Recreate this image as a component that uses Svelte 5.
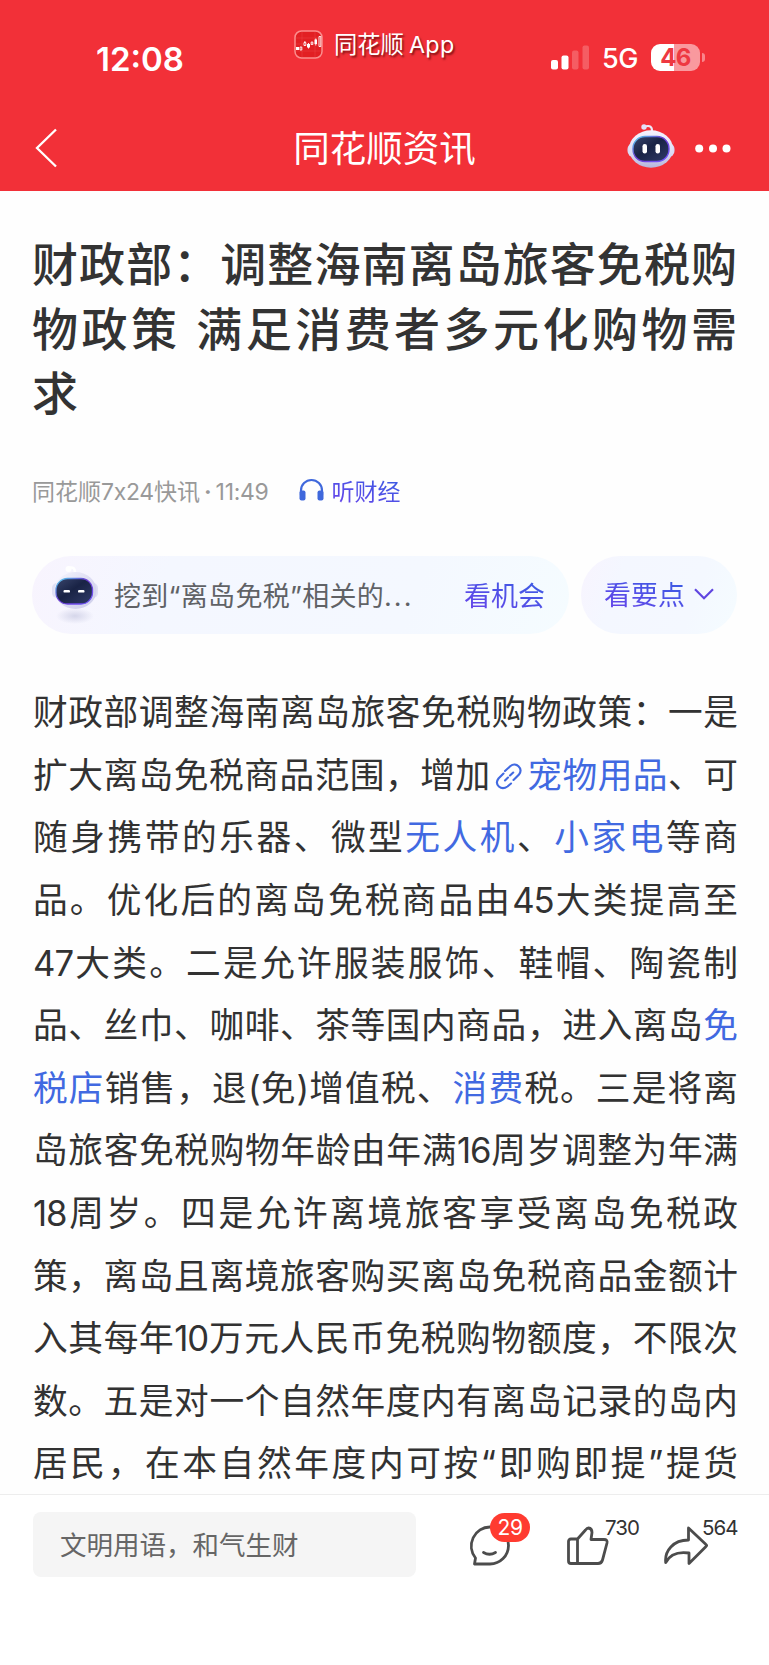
<script>
  const title = ['财政部：调整海南离岛旅客免税购', '物政策 满足消费者多元化购物需', '求'];

  const body = [
    [{ t: '财政部调整海南离岛旅客免税购物政策：一是' }],
    [{ t: '扩大离岛免税商品范围，增加' }, { icon: true }, { t: '宠物用品', link: true }, { t: '、可' }],
    [{ t: '随身携带的乐器、微型' }, { t: '无人机', link: true }, { t: '、' }, { t: '小家电', link: true }, { t: '等商' }],
    [{ t: '品。优化后的离岛免税商品由' }, { t: '45', num: true }, { t: '大类提高至' }],
    [{ t: '47', num: true }, { t: '大类。二是允许服装服饰、鞋帽、陶瓷制' }],
    [{ t: '品、丝巾、咖啡、茶等国内商品，进入离岛' }, { t: '免', link: true }],
    [{ t: '税店', link: true }, { t: '销售，退' }, { t: '(', num: true }, { t: '免' }, { t: ')', num: true }, { t: '增值税、' }, { t: '消费', link: true }, { t: '税。三是将离' }],
    [{ t: '岛旅客免税购物年龄由年满' }, { t: '16', num: true }, { t: '周岁调整为年满' }],
    [{ t: '18', num: true }, { t: '周岁。四是允许离境旅客享受离岛免税政' }],
    [{ t: '策，离岛且离境旅客购买离岛免税商品金额计' }],
    [{ t: '入其每年' }, { t: '10', num: true }, { t: '万元人民币免税购物额度，不限次' }],
    [{ t: '数。五是对一个自然年度内有离岛记录的岛内' }],
    [{ t: '居民，在本自然年度内可按“即购即提”提货' }],
  ];
</script>

<div class="page">
  <header>
    <div class="status">
      <span class="time">12:08</span>
      <div class="app">
        <svg width="29" height="29" viewBox="0 0 29 29">
          <rect x="1" y="1" width="27" height="27" rx="6.5" fill="#e21f23" stroke="#fb8d8d" stroke-width="1.5" />
          <path d="M2 8H27M2 14H27M2 21H27M8 2V27M21 2V27" stroke="#ef4c4c" stroke-width=".4" />
          <path d="M2 17h3v3H2zM13 14h3v3.5h-3zM20.5 9.5h2.5v4.500h-2.500z" fill="#fff" />
          <path d="M6 17h1.800v3H6zM10 12.500h1.800v3H10zM17.200 12h1.600v2.500h-1.600zM25 6.500h1.800v10H25zM10.900 11v1.500M14.500 13v5.500M21.800 8.500v7" fill="none" stroke="#fff" stroke-width=".9" />
        </svg>
        <span class="app-name">同花顺<i>App</i></span>
      </div>
      <div class="signals">
        <svg width="39" height="25" viewBox="0 0 39 25" fill="#fff">
          <rect x="0" y="15" width="7" height="9.500" rx="2" />
          <rect x="10.500" y="10.500" width="7" height="14" rx="2" />
          <rect x="21" y="5.500" width="6.500" height="19" rx="2" opacity=".22" />
          <rect x="31.500" y="0.500" width="6.500" height="24" rx="2" opacity=".22" />
        </svg>
        <span class="net">5G</span>
        <span class="battery">46</span>
        <span class="nub"></span>
      </div>
    </div>
    <nav>
      <svg class="back" width="23" height="40" viewBox="0 0 23 40"><path d="M21 1.500L2 20L21 38.500" fill="none" stroke="#fff" stroke-width="2.300" /></svg>
      <h2>同花顺资讯</h2>
      <div class="nav-right">
        <svg width="48" height="45" viewBox="0 0 48 45">
          <defs>
            <linearGradient id="shell" x1="0" y1="0" x2="0" y2="1"><stop offset="0" stop-color="#f6f4ff" /><stop offset=".6" stop-color="#dcdcf2" /><stop offset="1" stop-color="#b5b5dc" /></linearGradient>
            <linearGradient id="rim" x1="0" y1="0" x2="1" y2="1"><stop offset="0" stop-color="#55d8ee" /><stop offset=".45" stop-color="#6b3ad0" /><stop offset="1" stop-color="#7058ff" /></linearGradient>
            <linearGradient id="face" x1="0" y1="0" x2="1" y2="1"><stop offset="0" stop-color="#39456c" /><stop offset=".45" stop-color="#192345" /><stop offset="1" stop-color="#303b68" /></linearGradient>
          </defs>
          <path d="M17 3C23 .5 25.500 3 25 8" fill="none" stroke="#eceafa" stroke-width="2.200" />
          <circle cx="17" cy="3" r="2.700" fill="#e3e1fa" />
          <rect x="0.500" y="19" width="47" height="14" rx="6" fill="#dadaf5" />
          <ellipse cx="24" cy="25" rx="22" ry="18.700" fill="url(#shell)" />
          <rect x="6" y="12.500" width="36" height="25" rx="12" fill="url(#face)" stroke="url(#rim)" stroke-width="1.400" />
          <rect x="15.500" y="20" width="4.500" height="9.500" rx="2.200" fill="#fff" /><rect x="28.500" y="20" width="4.500" height="9.500" rx="2.200" fill="#fff" />
        </svg>
        <svg width="36" height="9" viewBox="0 0 36 9" fill="#fff"><circle cx="4.200" cy="4.500" r="4" /><circle cx="18" cy="4.500" r="4" /><circle cx="31.500" cy="4.500" r="4" /></svg>
      </div>
    </nav>
  </header>

  <main>
    <h1>
      {#each title as line, i}
        <span class="line" class:last={i === title.length - 1}>{line}</span>
      {/each}
    </h1>

    <div class="meta">
      <span>同花顺<em>7x24</em>快讯<b>·</b><em>11:49</em></span>
      <svg width="25" height="23" viewBox="0 0 25 23">
        <path d="M2 17V12.500A10.500 10.500 0 0 1 23 12.500V17" fill="none" stroke="#3f68dc" stroke-width="2.200" />
        <rect x=".5" y="12.500" width="6" height="10" rx="2" fill="#3f68dc" /><rect x="18.500" y="12.500" width="6" height="10" rx="2" fill="#3f68dc" />
      </svg>
      <span class="listen">听财经</span>
    </div>

    <div class="pills">
      <div class="pill chance">
        <svg width="48" height="60" viewBox="0 0 48 60">
          <defs>
            <radialGradient id="shade"><stop offset="0" stop-color="#d5d6ea" /><stop offset="1" stop-color="#d5d6ea" stop-opacity="0" /></radialGradient>
            <linearGradient id="shell2" x1="0" y1="0" x2="1" y2="1"><stop offset="0" stop-color="#f7f6fe" /><stop offset=".6" stop-color="#d9d9f1" /><stop offset="1" stop-color="#cdcee9" /></linearGradient>
          </defs>
          <ellipse cx="24" cy="51" rx="19" ry="8" fill="url(#shade)" />
          <path d="M17 3C22 1.500 24 3 24 8" fill="none" stroke="#fff" stroke-width="2.500" />
          <circle cx="17.500" cy="4" r="3" fill="#fff" />
          <rect x="1" y="18" width="46" height="15" rx="5" fill="#e0e0f5" />
          <ellipse cx="24.500" cy="25.500" rx="21" ry="18.500" fill="url(#shell2)" />
          <rect x="5" y="13.500" width="36.500" height="25.500" rx="11.500" fill="url(#face)" stroke="url(#rim)" stroke-width="1.300" />
          <rect x="12.500" y="25" width="6.500" height="2.600" rx="1.200" fill="#fff" /><rect x="27" y="25" width="6.500" height="2.600" rx="1.200" fill="#fff" />
        </svg>
        <span class="hint">挖到“离岛免税”相关的<i>...</i></span>
        <span class="grad">看机会</span>
      </div>
      <div class="pill points">
        <span class="grad">看要点</span>
        <svg width="20" height="12" viewBox="0 0 20 12"><path d="M1 1.200L10 10.200L19 1.200" fill="none" stroke="#6046e0" stroke-width="2.200" /></svg>
      </div>
    </div>

    <article>
      {#each body as line}
        <p>{#each line as part}{#if part.icon}<svg class="chain" width="28" height="28" viewBox="-1 -1 28 28" fill="none" stroke="#4169e1" stroke-width="2.100" stroke-linecap="round"><path d="M9 8L14.500 3C20-1.500 27.500 5.500 23 11.500L17.500 17" /><path d="M7.500 10.500L2.500 15.500C-2 21.500 5 28 11.500 23.500L15 20.500" /><path d="M9 17.500L12 14.500M14 12.500L17.200 9.500" /></svg>{:else}<span class:link={part.link} class:num={part.num}>{part.t}</span>{/if}{/each}</p>
      {/each}
    </article>
  </main>

  <footer>
    <div class="input">文明用语，和气生财</div>
    <div class="action">
      <svg width="42" height="42" viewBox="0 0 42 42" fill="none" stroke="#4c4c4c" stroke-width="2.800" stroke-linecap="round" stroke-linejoin="round">
        <path d="M21 2A18.500 19 0 0 0 6.500 33L5.500 39H21A18.500 18.500 0 0 0 21 2Z" /><path d="M14.500 27.500Q20.500 31 26.500 27.500" />
      </svg>
      <span class="badge">29</span>
    </div>
    <div class="action">
      <svg width="42" height="40" viewBox="0 0 42 40" fill="none" stroke="#4c4c4c" stroke-width="2.800" stroke-linejoin="round">
        <path d="M10.500 13H4Q1.500 13 1.500 15.500V35Q1.500 37.500 4 37.500H31Q34.500 37.500 35.500 34L40 17Q40.800 13.500 37 13.500H24L25 6.500Q25 2.500 21.500 2Q20 2 18.500 4L10.500 13V37.500" />
      </svg>
      <span class="count">730</span>
    </div>
    <div class="action">
      <svg width="45" height="40" viewBox="0 0 45 40" fill="none" stroke="#4c4c4c" stroke-width="2.800" stroke-linejoin="round">
        <path d="M24.500 2L42 18.500Q43.300 19.500 42 20.500L25 37.500V27Q8 24.500 1.700 36.500C.5 25 9 14 24.500 14Z" />
      </svg>
      <span class="count">564</span>
    </div>
  </footer>
</div>

<style>
  :global(body) { background: #fff; }
  .page {
    width: 769px; height: 1665px; overflow: hidden; display: flex; flex-direction: column;
    font-family: Inter, "Noto Sans CJK SC", sans-serif; color: #323232; background: #fefefe;
    white-space: nowrap;
  }
  svg { display: block; flex: none; }
  i, em { font-style: normal; }
  header { height: 191px; background: #f23038; color: #fff; flex: none; }
  .status { height: 105px; display: grid; grid-template-columns: 294px 257px 1fr; align-items: start; }
  .time { padding: 38.500px 0 0 96px; font-size: 33px; line-height: 40px; font-weight: 600; }
  .app { display: flex; align-items: center; gap: 11px; padding-top: 30px; height: 29px; }
  .app-name { font-size: 23.300px; line-height: 29px; text-shadow: 1.500px 1.500px 2px rgba(70, 0, 0, .65); }
  .app-name i { margin-left: 5px; letter-spacing: .4px; }
  .signals { display: flex; align-items: center; padding-top: 44px; height: 27px; }
  .net { font-size: 27px; font-weight: 500; margin-left: 12px; width: 49px; letter-spacing: -.5px; padding-top: 2px; }
  .battery {
    width: 49px; height: 27px; border-radius: 9px; text-align: center; line-height: 27px;
    font-size: 24px; font-weight: 700; color: #ee3841; letter-spacing: -.6px;
    background: linear-gradient(90deg, #fff 47%, #f9999e 47%);
  }
  .nub { width: 3px; height: 9px; margin-left: 2px; border-radius: 0 4px 4px 0; background: #f9858b; }
  nav { height: 86px; display: grid; grid-template-columns: 1fr auto 1fr; align-items: center; }
  .back { margin-left: 35px; }
  h2 { margin: 0; font-size: 36.500px; line-height: 50px; font-weight: 400; padding-top: 1px; }
  .nav-right { display: flex; justify-content: flex-end; align-items: center; gap: 20px; padding-right: 38px; }
  .nav-right svg:first-child { margin-bottom: 4px; }
  main { flex: 1; min-height: 0; overflow: hidden; padding: 41px 31px 0 32px; }
  h1 { margin: 0 1px 0 0; font-size: 46px; line-height: 64.600px; font-weight: 500; color: #333; }
  .line { display: block; text-align: justify; text-align-last: justify; }
  .line.last { text-align-last: left; }
  .meta { display: flex; align-items: center; height: 30px; margin-top: 49px; font-size: 23px; color: #999; }
  .meta b { font-weight: 700; margin: 0 4px; }
  .meta em { letter-spacing: -.3px; }
  .meta svg { margin: 0 8px 0 30px; }
  .listen, .grad { color: transparent; background: linear-gradient(20deg, #6b42eb, #345fe2); background-clip: text; }
  .pills { display: flex; gap: 12px; margin-top: 51px; }
  .pill {
    height: 78px; box-sizing: border-box; border-radius: 39px; display: flex; align-items: center; font-size: 27px;
    background: linear-gradient(110deg, #f8f4fe 0%, #f4f7ff 25%, #f4f8ff 70%, #f5fcff 100%);
  }
  .chance { width: 537px; padding: 0 24px 0 19px; }
  .points { width: 156px; padding-left: 23px; padding-bottom: 2px; gap: 9px; }
  .hint { margin-left: 15px; flex: 1; color: #606266; letter-spacing: .3px; }
  .hint i { letter-spacing: 2px; }
  article { margin: 47.500px 0 0 1px; font-size: 34.700px; line-height: 62.600px; }
  p { margin: 0; height: 62.600px; text-align: justify; text-align-last: justify; }
  .link { color: #4169e1; }
  .num { letter-spacing: -1px; }
  .chain { display: inline-block; vertical-align: -2px; margin: 0 4px; }
  footer {
    height: 171px; flex: none; box-sizing: border-box; border-top: 1px solid #ededed; background: #fff;
    display: flex; align-items: flex-start; padding: 17px 0 0 33px;
  }
  .input {
    width: 383px; height: 65px; line-height: 67px; box-sizing: border-box; padding-left: 27px; border-radius: 8px;
    background: #f5f5f5; color: #666; font-size: 26.500px;
  }
  .action { position: relative; margin: 13px 0 0 53px; }
  .action + .action { margin: 14px 0 0 56px; }
  .action:last-child { margin-left: 55px; }
  .badge {
    position: absolute; left: 21px; top: -12px; width: 40px; height: 29px; border-radius: 15px; background: #ff3b30;
    color: #fff; font-size: 21px; line-height: 29px; text-align: center; letter-spacing: -.5px;
  }
  .count { position: absolute; left: 38px; top: -11px; font-size: 20.500px; line-height: 26px; color: #333; letter-spacing: -.9px; }
</style>
